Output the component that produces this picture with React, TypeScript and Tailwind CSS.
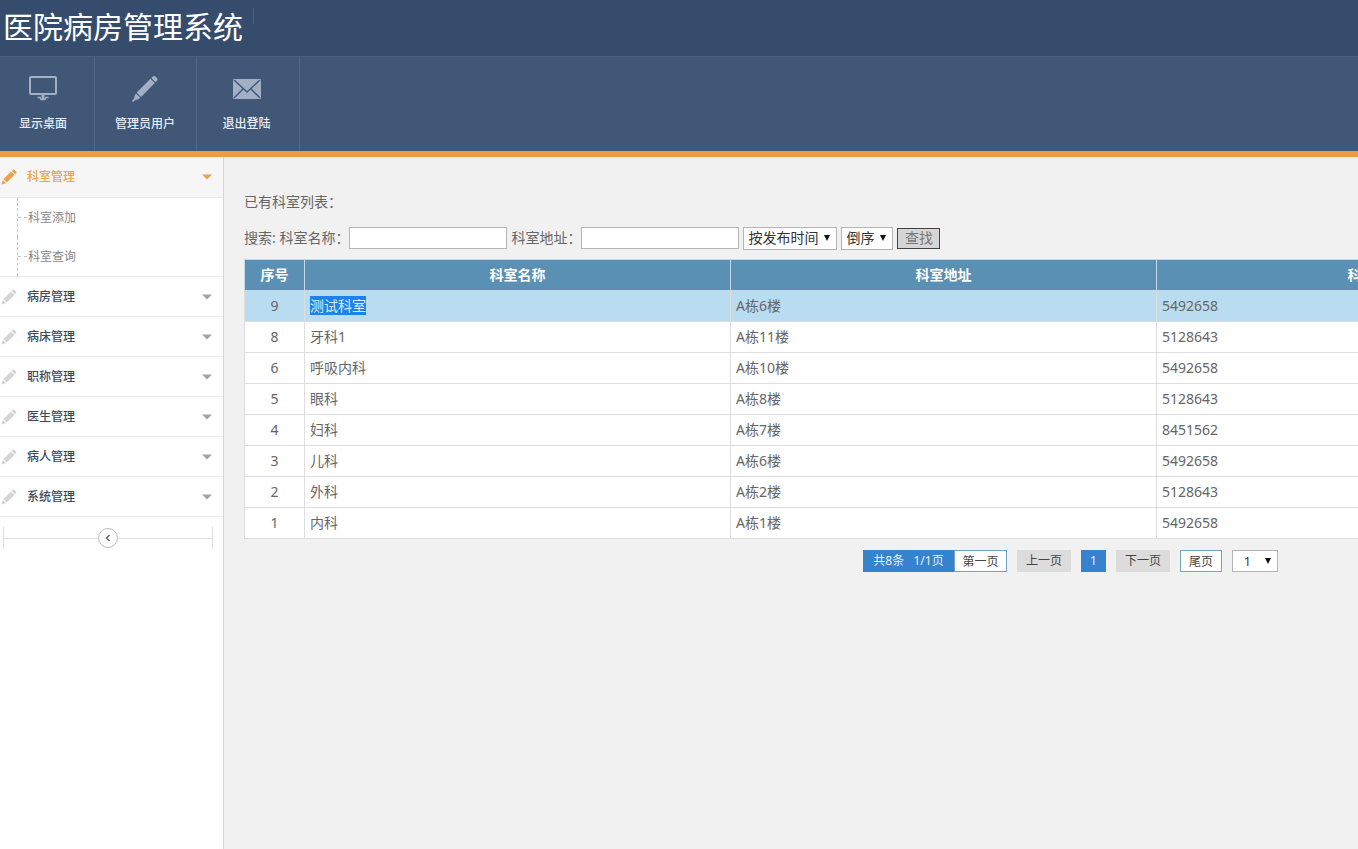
import type { ReactNode } from 'react'
import clsx from 'clsx'

const departments = [
  { id: 9, name: '测试科室', address: 'A栋6楼', phone: '5492658' },
  { id: 8, name: '牙科1', address: 'A栋11楼', phone: '5128643' },
  { id: 6, name: '呼吸内科', address: 'A栋10楼', phone: '5492658' },
  { id: 5, name: '眼科', address: 'A栋8楼', phone: '5128643' },
  { id: 4, name: '妇科', address: 'A栋7楼', phone: '8451562' },
  { id: 3, name: '儿科', address: 'A栋6楼', phone: '5492658' },
  { id: 2, name: '外科', address: 'A栋2楼', phone: '5128643' },
  { id: 1, name: '内科', address: 'A栋1楼', phone: '5492658' },
]

const menus = ['病房管理', '病床管理', '职称管理', '医生管理', '病人管理', '系统管理']

function MonitorIcon() {
  return (
    <svg width="28" height="28" viewBox="0 0 28 28" fill="none" stroke="#a3b0c4" strokeWidth="2">
      <rect x="1" y="2" width="26" height="17" rx="1" />
      <path d="M14 19v5" strokeWidth="3" />
      <path d="M8.500 22.500h2.500l1 2h4l1-2h2.500" strokeWidth="1.500" />
    </svg>
  )
}

function MarkerIcon() {
  return (
    <svg width="28" height="28" viewBox="0 0 28 28" fill="#a3b0c4">
      <path d="M20.300 3l1.200-1.200c1-1 2.300-1 3.200-.1l1.200 1.200c.9.900.9 2.200-.1 3.200L24.600 7.300z" />
      <path d="M19.500 3.800l4.300 4.300L10 21.900l-4.300-4.300z" />
      <path d="M5 18.400l4.200 4.200-1.400 1.400c-1 .7-2 .8-3 .7L2 27l-1-1 2.300-2.800c-.1-1.200.1-2.300.7-3.300z" />
    </svg>
  )
}

function MailIcon() {
  return (
    <svg width="28" height="28" viewBox="0 0 28 28">
      <rect x="0" y="4" width="28" height="20" rx="1" fill="#a3b0c4" />
      <path d="M1 5l13 12L27 5M1 23l9-9M27 23l-9-9" fill="none" stroke="#425a7b" strokeWidth="1.500" />
    </svg>
  )
}

function PencilIcon({ className }: { className?: string }) {
  return (
    <svg className={className} width="16" height="16" viewBox="0 0 16 16" fill="currentColor">
      <path d="M10.700 1.900l1-1c.5-.5 1.300-.5 1.800 0l1.600 1.600c.5.500.5 1.300 0 1.800l-1 1z" />
      <path d="M10 2.600l3.400 3.400-7.600 7.600-3.400-3.400z" />
      <path d="M1.800 10.900l3.300 3.300L0.500 15.500z" />
    </svg>
  )
}

function Caret() {
  return (
    <svg width="10" height="6" viewBox="0 0 10 6" fill="currentColor">
      <path d="M0 0.500h10L5 5.500z" />
    </svg>
  )
}

function NavItem({ icon, label, className }: { icon: ReactNode; label: string; className: string }) {
  return (
    <a
      href="#"
      className={clsx(
        'flex h-[94px] shrink-0 flex-col items-center border-r border-[#50678a] pt-[18px] text-xs font-medium text-[#e8edf4]',
        className,
      )}
    >
      {icon}
      <span className="mt-[13px] leading-4">{label}</span>
    </a>
  )
}

function Select({ label, value, className }: { label: string; value: string; className: string }) {
  return (
    <span className="relative inline-flex">
      <select aria-label={label} className={clsx('appearance-none border border-[#b4b4b4] bg-white text-[#333]', className)}>
        <option>{value}</option>
      </select>
      <svg className="pointer-events-none absolute top-2 right-[7px]" width="6" height="6" viewBox="0 0 6 6" fill="#111">
        <path d="M0 0h6L3 6z" />
      </svg>
    </span>
  )
}

function Header() {
  return (
    <header className="border-b-[6px] border-[#f09a42] bg-[#405778]">
      <div className="flex h-14 items-start bg-[#364c6c]">
        <h1 className="pl-[3px] text-[30px] leading-[54px] whitespace-nowrap text-white">医院病房管理系统</h1>
        <span className="mt-2 ml-[10px] h-4 w-px bg-[#4b6182]" />
      </div>
      <nav className="flex border-t border-[#4a6183]">
        <NavItem icon={<MonitorIcon />} label="显示桌面" className="w-[95px] pr-2" />
        <NavItem icon={<MarkerIcon />} label="管理员用户" className="w-[102px] pr-px" />
        <NavItem icon={<MailIcon />} label="退出登陆" className="w-[103px] pr-[3px]" />
      </nav>
    </header>
  )
}

function Sidebar() {
  return (
    <aside className="w-[224px] shrink-0 border-r border-[#d6d6d6] bg-white text-xs">
      <button className="flex h-10 w-full items-center bg-[#f6f6f6] pr-[11px] pl-px font-medium text-[#f0a04b]">
        <PencilIcon />
        <span className="ml-[10px] flex-1 text-left">科室管理</span>
        <Caret />
      </button>
      <ul className="border-y border-[#e9e9e9] pl-[17px] text-[#888]">
        {['科室添加', '科室查询'].map((item) => (
          <li key={item} className="flex h-[39px] items-center border-l border-dashed border-[#c4c4c4]">
            <span className="mr-px w-[9px] border-t border-dashed border-[#c4c4c4]" />
            <a href="#">{item}</a>
          </li>
        ))}
      </ul>
      {menus.map((menu) => (
        <button
          key={menu}
          className="flex h-10 w-full items-center border-b border-[#e9e9e9] pr-[11px] pl-px font-medium text-[#3d4a5c]"
        >
          <PencilIcon className="text-[#d4d4d4]" />
          <span className="ml-[10px] flex-1 text-left">{menu}</span>
          <span className="text-[#a3a3a3]">
            <Caret />
          </span>
        </button>
      ))}
      <div className="mt-[10px] mr-[10px] ml-[3px] flex h-[22px] items-center border-x border-[#dcdcdc]">
        <span className="h-px flex-1 bg-[#e2e2e2]" />
        <button
          aria-label="收起菜单"
          className="flex h-5 w-5 items-center justify-center rounded-full border border-[#bdbdbd] bg-white"
        >
          <svg width="6" height="8" viewBox="0 0 6 8" fill="none" stroke="#666" strokeWidth="1.500">
            <path d="M4.500 1L1.500 4l3 3" />
          </svg>
        </button>
        <span className="h-px flex-1 bg-[#e2e2e2]" />
      </div>
    </aside>
  )
}

function SearchForm() {
  return (
    <form className="mt-[14px] flex h-6 items-center whitespace-nowrap" onSubmit={(e) => e.preventDefault()}>
      <label htmlFor="dept-name">搜索: 科室名称：</label>
      <input id="dept-name" className="h-[22px] w-[158px] border border-[#b4b4b4] bg-white px-1" />
      <label htmlFor="dept-address" className="ml-1">
        科室地址：
      </label>
      <input id="dept-address" className="h-[22px] w-[158px] border border-[#b4b4b4] bg-white px-1" />
      <span className="ml-1 flex gap-1">
        <Select label="排序字段" value="按发布时间" className="h-[23px] w-[94px] pl-1" />
        <Select label="排序方式" value="倒序" className="h-[23px] w-[52px] pl-1" />
      </span>
      <button className="ml-1 h-[21px] w-[43px] border border-[#444] bg-[#d6d6d6] leading-[18px] text-[#777]">查找</button>
    </form>
  )
}

function DepartmentTable() {
  return (
    <table className="mt-[9px] w-full table-fixed border-collapse bg-white">
      <colgroup>
        <col className="w-[60px]" />
        <col className="w-[426px]" />
        <col className="w-[426px]" />
        <col className="w-[438px]" />
        <col />
      </colgroup>
      <thead>
        <tr className="h-[31px] bg-[#5b90b5] text-white">
          {['序号', '科室名称', '科室地址', '科室电话', '操作'].map((title) => (
            <th key={title} className="border border-[#c3d9e7] p-0 font-bold">
              {title}
            </th>
          ))}
        </tr>
      </thead>
      <tbody>
        {departments.map((row, i) => (
          <tr key={row.id} className={clsx('h-[31px]', i === 0 && 'bg-[#b9dcf1]')}>
            <td className="border border-[#dedede] p-0 text-center">{row.id}</td>
            <td className="border border-[#dedede] px-[5px] py-0">
              <span className={clsx(i === 0 && 'bg-[#1e82ea] text-[#d9ecff]')}>{row.name}</span>
            </td>
            <td className="border border-[#dedede] px-[5px] py-0">{row.address}</td>
            <td className="border border-[#dedede] px-[5px] py-0">{row.phone}</td>
            <td className="border border-[#dedede] px-[5px] py-0" />
          </tr>
        ))}
      </tbody>
    </table>
  )
}

function Pagination() {
  return (
    <div className="mt-[11px] flex h-[22px] justify-center gap-[10px] text-xs leading-[22px] text-[#444]">
      <div className="flex">
        <span className="w-[91px] bg-[#3583cf] text-center whitespace-pre text-[#e4f0fb]">{'共8条   1/1页'}</span>
        <button className="w-[53px] border border-[#6fa6c8] bg-white">第一页</button>
      </div>
      <button className="w-[54px] bg-[#dcdcdc]">上一页</button>
      <button className="w-[25px] bg-[#3583cf] text-[#e4f0fb]">1</button>
      <button className="w-[54px] bg-[#dcdcdc]">下一页</button>
      <button className="w-[42px] border border-[#6fa6c8] bg-white">尾页</button>
      <Select label="跳转页码" value="1" className="h-[22px] w-[46px] pl-[11px]" />
    </div>
  )
}

export default function App() {
  return (
    <div className="flex min-h-screen flex-col overflow-hidden bg-[#f1f1f1] font-['Noto_Sans','Noto_Sans_CJK_SC',sans-serif]">
      <Header />
      <div className="flex flex-1">
        <Sidebar />
        <main className="min-w-0 flex-1 overflow-hidden pt-[35px] pl-5 text-sm text-[#666]">
          <div className="min-w-[1653px]">
            <p>已有科室列表：</p>
            <SearchForm />
            <DepartmentTable />
            <Pagination />
          </div>
        </main>
      </div>
    </div>
  )
}
